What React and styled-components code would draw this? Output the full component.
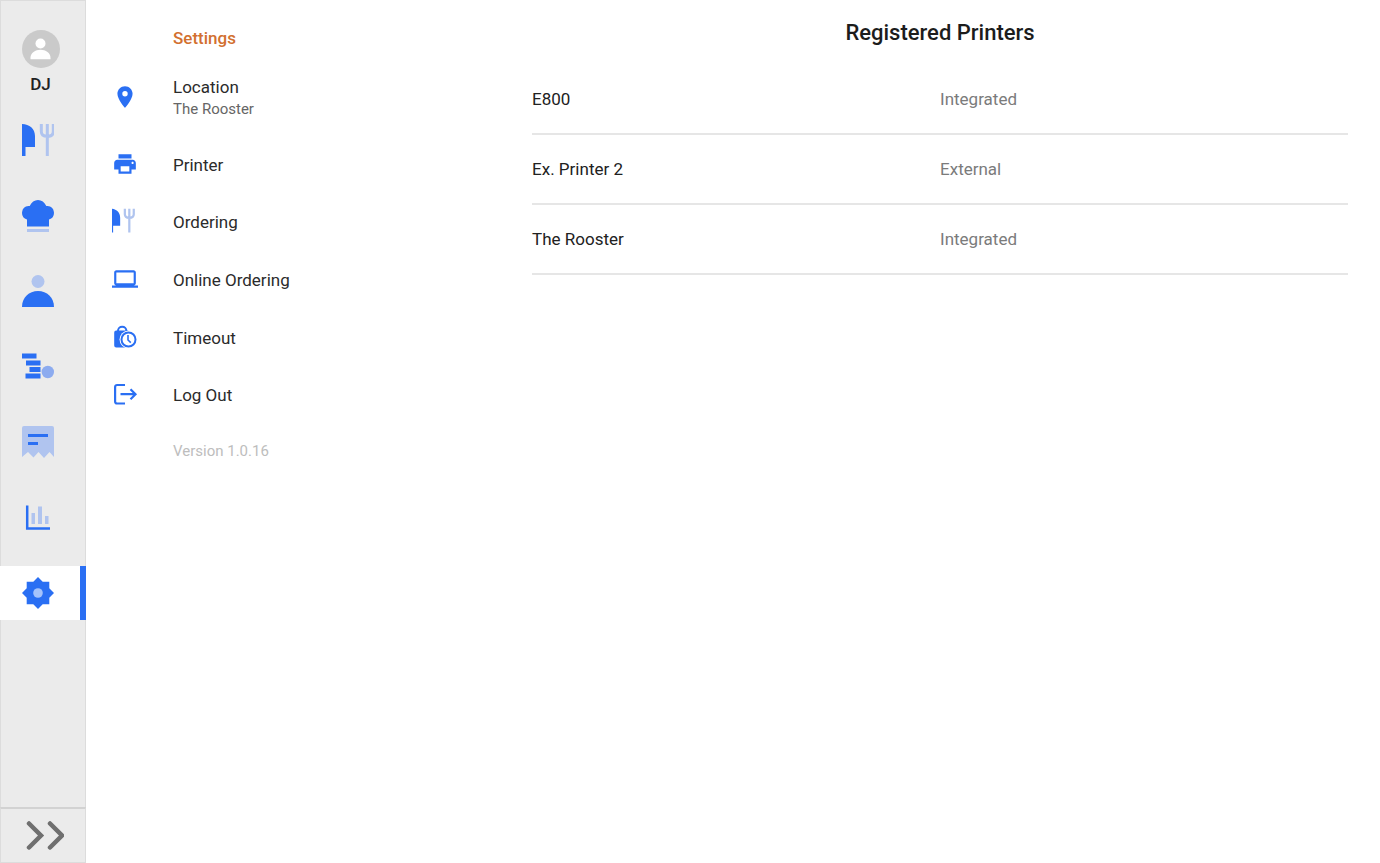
import React from 'react';
import styled, { createGlobalStyle } from 'styled-components';
import { MdLaptop, MdLocationOn, MdPrint } from 'react-icons/md';

const BLUE = '#2a6ff3';
const PALE = '#b0c4ef';

const GlobalStyle = createGlobalStyle`
  *, *::before, *::after { box-sizing: border-box; }
  body {
    margin: 0;
    background: #fff;
    color: #212121;
    font-family: Roboto, "Liberation Sans", sans-serif;
    font-size: 17px;
  }
  svg { display: block; }
`;

const Page = styled.div`
  display: grid;
  grid-template-columns: 86px minmax(240px, 32fr) 68fr;
  min-height: 100vh;
`;

const Rail = styled.aside`
  display: flex;
  flex-direction: column;
  background: #ebebeb;
  box-shadow: inset 0 0 0 1px #dcdcdc;
`;

const Profile = styled.button`
  display: flex;
  flex-direction: column;
  align-items: center;
  gap: 6px;
  padding: 30px 5px 0 0;
  border: 0;
  background: none;
  color: #212121;
  font: 500 17px/20px Roboto, "Liberation Sans", sans-serif;
  cursor: pointer;
`;

const RailNav = styled.nav`
  display: flex;
  flex-direction: column;
  justify-content: space-between;
  min-height: 507px;
  margin-top: 19px;
`;

const RailLink = styled.a`
  display: flex;
  align-items: center;
  height: 54px;
  padding-left: 22px;
  border-right: 6px solid ${({ $active }) => ($active ? BLUE : 'transparent')};
  background: ${({ $active }) => ($active ? '#fff' : 'none')};
`;

const ExpandButton = styled.button`
  display: flex;
  align-items: center;
  height: 56px;
  margin-top: auto;
  padding: 0 0 0 25px;
  border: 1px solid #dcdcdc;
  border-top: 2px solid #d2d2d2;
  background: none;
  cursor: pointer;
`;

const SettingsPanel = styled.section`
  padding: 26px 0 0 26px;
`;

const SettingsTitle = styled.h2`
  margin: 0 0 26px;
  padding-left: 61px;
  color: #d2702f;
  font-size: 17px;
  font-weight: 500;
  line-height: 24px;
`;

const MenuLink = styled.a`
  display: flex;
  align-items: center;
  gap: 35px;
  color: #2b2b2b;
  line-height: 22px;
  text-decoration: none;
`;

const IconSlot = styled.span`
  flex: none;
  width: 26px;
  padding-bottom: 2px;
  color: ${BLUE};
`;

const MenuText = styled.span`
  display: flex;
  flex-direction: column;
`;

const MenuNote = styled.span`
  color: #666;
  font-size: 15px;
`;

const MenuList = styled.ul`
  display: grid;
  grid-auto-rows: 1fr;
  min-height: 288px;
  margin: 16px 0;
  padding: 0;
  list-style: none;
`;

const MenuItem = styled.li`
  display: grid;
`;

const Version = styled.p`
  margin: 0;
  padding-left: 61px;
  color: #bdbdbd;
  font-size: 15px;
  line-height: 22px;
`;

const Main = styled.main`
  padding: 19px 32px;
`;

const MainTitle = styled.h1`
  margin: 0 0 18px;
  color: #1c1c1c;
  font-size: 22px;
  font-weight: 500;
  line-height: 28px;
  text-align: center;
`;

const PrinterTable = styled.table`
  width: 100%;
  border-spacing: 0;
  table-layout: fixed;
`;

const PrinterName = styled.th`
  height: 70px;
  padding: 0;
  border-bottom: 2px solid #e6e6e6;
  font-weight: 400;
  text-align: left;
`;

const PrinterType = styled.td`
  padding: 0;
  border-bottom: 2px solid #e6e6e6;
  color: #7b7b7b;
`;

const AvatarIcon = () => (
  <svg width="38" height="38" viewBox="0 0 38 38" aria-hidden="true">
    <circle cx="19" cy="19" r="19" fill="#cacaca" />
    <circle cx="18.5" cy="13.5" r="5" fill="#fff" />
    <path d="M8.500 29.300v-1.500c0-5 4.800-8 10-8s10 3 10 8v1.500z" fill="#fff" />
  </svg>
);

const CutleryIcon = ({ size = 32, viewBox = '0 0 32 32' }) => (
  <svg width={size} height={size} viewBox={viewBox} aria-hidden="true">
    <path d="M0 0c7.5.2 13 4.8 13 12v11H3.5v9H0z" fill={BLUE} />
    <path
      d="M19.3 0v7.5c0 3 2.4 4.8 6 4.8s6-1.8 6-4.8V0M25.3 0v32"
      fill="none"
      stroke={PALE}
      strokeWidth="3"
    />
  </svg>
);

const ChefHatIcon = () => (
  <svg width="32" height="32" viewBox="0 0 32 32" aria-hidden="true">
    <path
      d="M5 26.500V19.500A6.900 6.900 0 0 1 6.500 6c.4 0 .8 0 1.200.1C9.500 2.300 12.500 0 16 0s6.500 2.300 8.300 6.100c.4-.1.8-.1 1.200-.1A6.900 6.900 0 0 1 27 19.500v7z"
      fill={BLUE}
    />
    <path d="M5 29h22v3H5z" fill={PALE} />
  </svg>
);

const CustomerIcon = () => (
  <svg width="32" height="32" viewBox="0 0 32 32" aria-hidden="true">
    <circle cx="16" cy="6.500" r="6.500" fill={PALE} />
    <path d="M0 32C0 22.500 7 16 16 16s16 6.500 16 16z" fill={BLUE} />
  </svg>
);

const CashIcon = () => (
  <svg width="32" height="32" viewBox="0 0 32 32" aria-hidden="true">
    <path d="M0 2.500h14.500v5H0zM4 9.500h14.500v5H4zM7.500 16h11v5h-11zM3.500 22.500h15v5h-15z" fill={BLUE} />
    <circle cx="25.800" cy="21" r="6.200" fill="#8cabef" />
  </svg>
);

const ReceiptIcon = () => (
  <svg width="32" height="32" viewBox="0 0 32 32" aria-hidden="true">
    <path
      d="M2 0h28a2 2 0 0 1 2 2v29l-4.500-5-5.500 6-5.500-6-5 5.500L6 26l-6 5V2a2 2 0 0 1 2-2z"
      fill={PALE}
    />
    <path d="M6 8h20v3H6zM6 16h10v3H6z" fill={BLUE} />
  </svg>
);

const ChartIcon = () => (
  <svg width="32" height="32" viewBox="0 0 32 32" aria-hidden="true">
    <path d="M9.500 11h3.500v11H9.500zM16 4.500h4V22h-4zM23 14h3.500v8H23z" fill={PALE} />
    <path d="M5.200 3.500v23H28" fill="none" stroke={BLUE} strokeWidth="2.500" />
  </svg>
);

const GearIcon = () => (
  <svg width="32" height="32" viewBox="0 0 32 32" aria-hidden="true">
    <path
      d="M16 0l4.700 4.700h6.600v6.600L32 16l-4.700 4.700v6.600h-6.600L16 32l-4.700-4.700H4.700v-6.600L0 16l4.700-4.700V4.700h6.600z"
      fill={BLUE}
    />
    <circle cx="16" cy="16" r="4.800" fill="#a5c3fb" />
  </svg>
);

const TimeoutIcon = () => (
  <svg width="26" height="26" viewBox="0 0 26 26" aria-hidden="true">
    <path d="M6 9V7c0-2.400 1.800-4.200 4.200-4.200S14.400 4.600 14.400 7v2" fill="none" stroke={BLUE} strokeWidth="2" />
    <path d="M2.200 8.500a2 2 0 0 1 2-2h12v17H4.200a2 2 0 0 1-2-2z" fill={BLUE} />
    <circle cx="16.500" cy="15.500" r="9" fill="#fff" />
    <circle cx="16.500" cy="15.500" r="7" fill="none" stroke={BLUE} strokeWidth="2" />
    <path d="M16 11v5l2.800 2.600" fill="none" stroke={BLUE} strokeWidth="1.600" />
  </svg>
);

const LogoutIcon = () => (
  <svg width="26" height="26" viewBox="0 0 26 26" fill="none" stroke={BLUE} strokeWidth="2.200" aria-hidden="true">
    <path d="M13 4H5.100a2 2 0 0 0-2 2v14.500a2 2 0 0 0 2 2H13M8.500 13.200H23M18.500 8.200l5 5-5 5" />
  </svg>
);

const ChevronsIcon = () => (
  <svg width="38" height="32" viewBox="0 0 38 32" aria-hidden="true">
    <path
      d="M3 3.500L15 15.500 3 27.500M24 3.500L36 15.500 24 27.500"
      fill="none"
      stroke="#6f6f6f"
      strokeWidth="4.500"
      strokeLinecap="round"
    />
  </svg>
);

const railLinks = [
  { label: 'Ordering', icon: <CutleryIcon /> },
  { label: 'Kitchen', icon: <ChefHatIcon /> },
  { label: 'Customers', icon: <CustomerIcon /> },
  { label: 'Cash', icon: <CashIcon /> },
  { label: 'Receipts', icon: <ReceiptIcon /> },
  { label: 'Reports', icon: <ChartIcon /> },
  { label: 'Settings', icon: <GearIcon />, active: true },
];

const menuItems = [
  { label: 'Printer', icon: <MdPrint size={26} /> },
  { label: 'Ordering', icon: <CutleryIcon size={26} viewBox="2 -1 35 35" /> },
  { label: 'Online Ordering', icon: <MdLaptop size={26} /> },
  { label: 'Timeout', icon: <TimeoutIcon /> },
  { label: 'Log Out', icon: <LogoutIcon /> },
];

const printers = [
  { name: 'E800', type: 'Integrated' },
  { name: 'Ex. Printer 2', type: 'External' },
  { name: 'The Rooster', type: 'Integrated' },
];

const SideRail = () => (
  <Rail>
    <Profile type="button">
      <AvatarIcon />
      DJ
    </Profile>
    <RailNav aria-label="Main">
      {railLinks.map(({ label, icon, active }) => (
        <RailLink
          key={label}
          href="#"
          $active={active}
          aria-label={label}
          aria-current={active ? 'page' : undefined}
        >
          {icon}
        </RailLink>
      ))}
    </RailNav>
    <ExpandButton type="button" aria-label="Expand menu">
      <ChevronsIcon />
    </ExpandButton>
  </Rail>
);

const SettingsMenu = () => (
  <SettingsPanel>
    <SettingsTitle>Settings</SettingsTitle>
    <MenuLink href="#">
      <IconSlot><MdLocationOn size={26} /></IconSlot>
      <MenuText>
        Location
        <MenuNote>The Rooster</MenuNote>
      </MenuText>
    </MenuLink>
    <MenuList>
      {menuItems.map(({ label, icon }) => (
        <MenuItem key={label}>
          <MenuLink href="#">
            <IconSlot>{icon}</IconSlot>
            {label}
          </MenuLink>
        </MenuItem>
      ))}
    </MenuList>
    <Version>Version 1.0.16</Version>
  </SettingsPanel>
);

const RegisteredPrinters = () => (
  <Main>
    <MainTitle id="printers-title">Registered Printers</MainTitle>
    <PrinterTable aria-labelledby="printers-title">
      <tbody>
        {printers.map(({ name, type }) => (
          <tr key={name}>
            <PrinterName scope="row">{name}</PrinterName>
            <PrinterType>{type}</PrinterType>
          </tr>
        ))}
      </tbody>
    </PrinterTable>
  </Main>
);

const App = () => (
  <>
    <GlobalStyle />
    <Page>
      <SideRail />
      <SettingsMenu />
      <RegisteredPrinters />
    </Page>
  </>
);

export default App;
